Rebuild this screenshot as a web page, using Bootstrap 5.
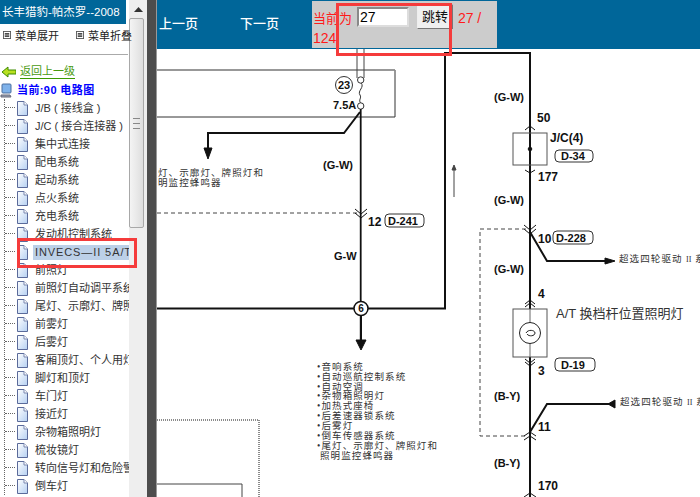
<!DOCTYPE html>
<html lang="zh-CN">
<head>
  <meta charset="UTF-8" />
  <title>长丰猎豹-帕杰罗--2008</title>
  <link href="https://cdn.jsdelivr.net/npm/bootstrap@5.3.3/dist/css/bootstrap.min.css" rel="stylesheet">
  <style>
    html, body { height: 497px; overflow: hidden; }
    body { font-family: "Liberation Sans", "Noto Sans CJK SC", sans-serif; font-size: 11px; color: #222; background: #fff; }
    .side-pane { width: 147px; height: 497px; flex: none; }
    .side-body { width: 129px; flex: none; white-space: nowrap; }
    .side-title { width: 126px; height: 24px; background: #006699; color: #fff; font-size: 11.5px; line-height: 24px; padding-left: 2px; }
    .side-tools { height: 31px; width: 128px; border-bottom: 1px solid #aaa; padding: 3px 0 0 3px; line-height: 18px; position: relative; z-index: 1; }
    .side-tools span { margin-left: 4px; flex: none; }
    .tool-gap { margin-left: 17px; }
    .back-row { height: 19px; margin-top: 7px; padding-left: 1px; gap: 4px; }
    .back-row a { color: #4a9a10; font-size: 11px; border-bottom: 1px solid #3a9a00; text-decoration: none; line-height: 14px; }
    .now-row { height: 18px; gap: 5px; color: #0000ff; font-weight: 700; font-size: 11px; letter-spacing: .4px; }
    .tree-list { list-style: none; margin: 0 0 0 4px; padding: 0; border-left: 1px dotted #666; }
    .tree-list li { height: 18px; line-height: 18px; position: relative; padding-left: 11px; display: flex; align-items: center; gap: 7px; color: #333; overflow: hidden; }
    .tree-list li::before { content: ""; position: absolute; left: 0; top: 8px; width: 10px; border-top: 1px dotted #666; }
    .tree-sel { background: #bcd0e8; padding: 0 2px; margin-left: -2px; height: 15px; line-height: 15px; flex: 1 0 auto; letter-spacing: .9px; }
    .scroll-rail { width: 18px; flex: none; background: #eeeeee; }
    .scroll-up { height: 18px; }
    .scroll-thumb { width: 15px; height: 210px; background: linear-gradient(90deg, #f4f4f4, #dedede); border: 1px solid #a8a8a8; border-radius: 2px; }
    .grip-line { width: 7px; height: 1px; background: #888; }
    .split-bar { width: 10px; flex: none; background: #4d4d4d; border-right: 1px solid #999; }
    .main-pane { width: 543px; flex: none; }
    .top-strip { height: 49px; background: #006699; padding-top: 1px; }
    .page-link { color: #fff; font-size: 13px; font-weight: 500; width: 81px; padding-left: 2px; line-height: 46px; }
    .jump-box { width: 185px; height: 47px; margin-left: -7px; background: #cccccc; color: #ff1a1a; font-size: 14px; line-height: 19px; padding: 3px 0 0 1px; }
    .jump-box span:first-child { font-size: 13px; }
    .jump-input { width: 52px; height: 20px; border: 2px inset #ddd; padding: 0 0 0 1px; font-size: 14px; color: #000; margin: 0 8px 0 5px; vertical-align: 1px; background: #fff; font-family: "Liberation Sans", sans-serif; }
    .jump-btn { width: 36px; height: 25px; padding: 0; border: 1px solid #777; border-top-color: #eee; border-left-color: #eee; background: #f0f0f0; color: #111; font-size: 13px; vertical-align: 2px; margin-right: 1px; line-height: 20px; }
    .diagram-svg { display: block; width: 543px; height: 448px; }
    .diagram-svg text { font-family: "Liberation Sans", "Noto Sans CJK SC", sans-serif; fill: #111; }
    .lbl { font-size: 11px; font-weight: 700; }
    .num { font-size: 12px; font-weight: 700; }
    .note { font-family: "Liberation Serif", "Noto Sans CJK SC", serif !important; font-size: 9.5px; letter-spacing: 1.1px; fill: #333 !important; }
    .roman-mark { letter-spacing: 0; font-size: 8px; }
    .note-big { font-size: 13px; fill: #333 !important; }
    .red-box { position: absolute; border: 3px solid #f53b3b; pointer-events: none; z-index: 2; }
    .red-tree { left: 17px; top: 238px; width: 120px; height: 30px; }
    .red-jump { left: 336px; top: 3px; width: 116px; height: 53px; }
  </style>
</head>
<body class="d-flex position-relative">
  <svg width="0" height="0" class="position-absolute">
    <defs>
      <linearGradient id="docFill" x1="0" y1="0" x2="1" y2="1">
        <stop offset="0" stop-color="#ffffff" />
        <stop offset="1" stop-color="#b5d0f2" />
      </linearGradient>
      <symbol id="docIcon" viewBox="0 0 12 15">
        <path d="M1.5 .5H8L11.5 4V14.5H1.5Z" fill="url(#docFill)" stroke="#5a6a9a" />
        <path d="M8 .5V4H11.5" fill="#fff" stroke="#7a88b0" />
      </symbol>
      <symbol id="menuIcon" viewBox="0 0 9 9">
        <rect x=".5" y=".5" width="8" height="8" fill="#fff" stroke="#555" />
        <path d="M2 3H7M2 4.5H7M2 6H7" stroke="#111" />
      </symbol>
    </defs>
  </svg>

  <aside class="side-pane d-flex">
    <div class="side-body">
      <div class="side-title">长丰猎豹-帕杰罗--2008</div>
      <div class="side-tools d-flex align-items-start">
        <svg width="8" height="8" class="mt-1 flex-shrink-0"><use href="#menuIcon" /></svg>
        <span>菜单展开</span>
        <svg width="8" height="8" class="mt-1 tool-gap flex-shrink-0"><use href="#menuIcon" /></svg>
        <span>菜单折叠</span>
      </div>
      <div class="back-row d-flex align-items-center">
        <svg width="15" height="12" viewBox="0 0 15 12" class="flex-shrink-0"><path d="M1 6L7 1V4H15V8H7V11Z" fill="#b8e020" stroke="#3e8a00" /></svg>
        <a href="#">返回上一级</a>
      </div>
      <div class="now-row d-flex align-items-center">
        <svg width="12" height="15" viewBox="0 0 12 15" class="flex-shrink-0"><rect x="2" y="1" width="9" height="9" rx="1" fill="#7fb2ea" stroke="#4a6f9f" /><path d="M1 12H10L11 14H1Z" fill="#9aa6b8" stroke="#667" /></svg>
        <span>当前:90 电路图</span>
      </div>
      <ul class="tree-list" id="menuTree"></ul>
    </div>
    <div class="scroll-rail d-flex flex-column">
      <div class="scroll-up d-flex justify-content-center align-items-center"><svg width="9" height="5" viewBox="0 0 9 5"><path d="M4.5 0L9 5H0Z" fill="#333" /></svg></div>
      <div class="scroll-thumb d-flex flex-column align-items-center justify-content-center gap-1">
        <span class="grip-line"></span><span class="grip-line"></span><span class="grip-line"></span>
      </div>
    </div>
  </aside>

  <div class="split-bar"></div>

  <main class="main-pane">
    <div class="top-strip d-flex">
      <div class="page-link">上一页</div>
      <div class="page-link">下一页</div>
      <div class="jump-box">
        <span>当前为</span><input class="jump-input" value="27"><button class="jump-btn" type="button">跳转</button> 27 / 124
      </div>
    </div>

    <svg class="diagram-svg" viewBox="157 49 543 448" fill="none" stroke="#111">
      <!-- fuse box -->
      <path d="M157 70H395V117H157" stroke="#333" />
      <path d="M157 70H395" stroke="#999" stroke-width="1.5" />
      <path d="M357 49V78M364 49V78" stroke="#444" />
      <circle cx="360.7" cy="80" r="3.2" fill="#fff" stroke="#333" />
      <path d="M361 83C365 87 357 91 360 95C362 98 358 100 360.7 103" stroke="#333" />
      <circle cx="360.7" cy="106" r="3.2" fill="#fff" stroke="#333" />
      <circle cx="344" cy="85" r="8.5" stroke="#333" />
      <text x="344" y="89" text-anchor="middle" class="num" stroke="none" style="font-size:11px">23</text>
      <text x="333" y="109" class="lbl" stroke="none">7.5A</text>

      <!-- left branch -->
      <path d="M360 112L344 133H208V150" stroke-width="2" />
      <path d="M204 148H212L208 159Z" fill="#111" />
      <text x="158" y="176" class="note" stroke="none">灯、示廓灯、牌照灯和</text>
      <text x="158" y="186" class="note" stroke="none">明监控蜂鸣器</text>
      <text x="323" y="169" class="lbl" stroke="none">(G-W)</text>

      <!-- main wires -->
      <path d="M360.7 109V340" stroke-width="1.8" />
      <path d="M157 213H357" stroke="#444" stroke-dasharray="4 3" />
      <path d="M355 209L361 214L367 209M355 213L361 218L367 213" />
      <text x="368" y="226" class="num" stroke="none">12</text>
      <rect x="385" y="214" width="39" height="13" rx="4" stroke="#333" />
      <text x="388" y="225" class="lbl" stroke="none">D-241</text>
      <text x="334" y="260" class="lbl" stroke="none">G-W</text>
      <path d="M157 308.5H445V53H530V497" stroke-width="2" />
      <circle cx="361" cy="308.5" r="7" fill="#fff" stroke="#111" stroke-width="1.5" />
      <text x="361" y="312" text-anchor="middle" class="lbl" stroke="none" style="font-size:10px">6</text>
      <path d="M361 316V340" stroke-width="2" />
      <path d="M356 340H366L361 350Z" fill="#111" />
      <path d="M454 197V167" stroke="#444" />
      <path d="M452 170L454 165L456 170Z" fill="#444" stroke="#444" />

      <!-- list under the splice -->
      <g stroke="none">
        <text x="317" y="370" class="note">•音响系统</text>
        <text x="317" y="380" class="note">•自动巡航控制系统</text>
        <text x="317" y="390" class="note">•自动空调</text>
        <text x="317" y="399" class="note">•杂物箱照明灯</text>
        <text x="317" y="409" class="note">•加热式座椅</text>
        <text x="317" y="419" class="note">•后差速器锁系统</text>
        <text x="317" y="429" class="note">•后雾灯</text>
        <text x="317" y="439" class="note">•倒车传感器系统</text>
        <text x="317" y="449" class="note">•尾灯、示廓灯、牌照灯和</text>
        <text x="320" y="459" class="note">照明监控蜂鸣器</text>
      </g>

      <!-- lower left boxes -->
      <path d="M157 420H259V497" stroke="#666" stroke-width="1.5" stroke-dasharray="1 1" />
      <path d="M157 484H242V497" stroke="#444" />

      <!-- right column -->
      <text x="494" y="101" class="lbl" stroke="none">(G-W)</text>
      <text x="537" y="122" class="num" stroke="none">50</text>
      <path d="M525 130L530 126L535 130" />
      <rect x="513" y="133" width="34" height="32" stroke="#555" />
      <circle cx="530" cy="149" r="1.8" fill="#111" />
      <text x="550" y="142" class="num" stroke="none">J/C(4)</text>
      <rect x="555" y="150" width="38" height="12" rx="4" stroke="#333" />
      <text x="561" y="160" class="lbl" stroke="none">D-34</text>
      <path d="M525 170L530 173L535 170" />
      <text x="538" y="181" class="num" stroke="none">177</text>
      <text x="494" y="204" class="lbl" stroke="none">(G-W)</text>
      <path d="M524 225L530 230L536 225M524 229L530 234L536 229" />
      <text x="538" y="243" class="num" stroke="none">10</text>
      <rect x="553" y="231" width="40" height="13" rx="4" stroke="#333" />
      <text x="556" y="242" class="lbl" stroke="none">D-228</text>
      <path d="M530 232L547 261H608" stroke-width="2" />
      <path d="M605 258L615 261L605 264Z" fill="#111" />
      <text x="619" y="262" class="note" stroke="none">超选四轮驱动 <tspan class="roman-mark">II</tspan> 系</text>
      <path d="M526 229H480V436H525" stroke="#444" stroke-dasharray="4 3" />
      <text x="494" y="273" class="lbl" stroke="none">(G-W)</text>
      <text x="538" y="298" class="num" stroke="none">4</text>
      <path d="M525 304L530 300L535 304M525 307L530 303L535 307" />
      <rect x="513" y="309" width="34" height="48" fill="#fff" stroke="#555" />
      <path d="M530 309V357" stroke="#666" />
      <circle cx="530" cy="333" r="10.5" fill="#fff" stroke="#222" />
      <path d="M526 333C528 329 535 330 535 333C535 336 529 337 527 334" stroke="#222" />
      <text x="556" y="318" class="note-big" stroke="none">A/T 换档杆位置照明灯</text>
      <path d="M525 359L530 363L535 359M525 362L530 366L535 362" />
      <text x="538" y="375" class="num" stroke="none">3</text>
      <rect x="555" y="358" width="40" height="13" rx="4" stroke="#333" />
      <text x="561" y="369" class="lbl" stroke="none">D-19</text>
      <text x="494" y="400" class="lbl" stroke="none">(B-Y)</text>
      <path d="M530 432L547 404H610" stroke-width="2" />
      <path d="M608 404L615 400V408Z" fill="#111" />
      <text x="620" y="405" class="note" stroke="none">超选四轮驱动 <tspan class="roman-mark">II</tspan> 系</text>
      <text x="538" y="431" class="num" stroke="none">11</text>
      <path d="M524 436L530 432L536 436M524 440L530 436L536 440" />
      <text x="494" y="467" class="lbl" stroke="none">(B-Y)</text>
      <text x="538" y="490" class="num" stroke="none">170</text>
      <path d="M524 497L530 493L536 497" />
    </svg>
  </main>

  <div class="red-box red-tree"></div>
  <div class="red-box red-jump"></div>

  <script>
    const items = ['J/B ( 接线盒 )', 'J/C ( 接合连接器 )', '集中式连接', '配电系统', '起动系统', '点火系统', '充电系统', '发动机控制系统',
      'INVECS—II 5A/T', '前照灯', '前照灯自动调平系统', '尾灯、示廓灯、牌照灯', '前雾灯', '后雾灯', '客厢顶灯、个人用灯',
      '脚灯和顶灯', '车门灯', '接近灯', '杂物箱照明灯', '梳妆镜灯', '转向信号灯和危险警告灯', '倒车灯'];
    document.getElementById('menuTree').innerHTML = items.map((t, i) =>
      `<li><svg width="12" height="15" class="flex-shrink-0"><use href="#docIcon" /></svg><span class="${i === 8 ? 'tree-sel' : ''}">${t}</span></li>`
    ).join('');
  </script>
</body>
</html>
